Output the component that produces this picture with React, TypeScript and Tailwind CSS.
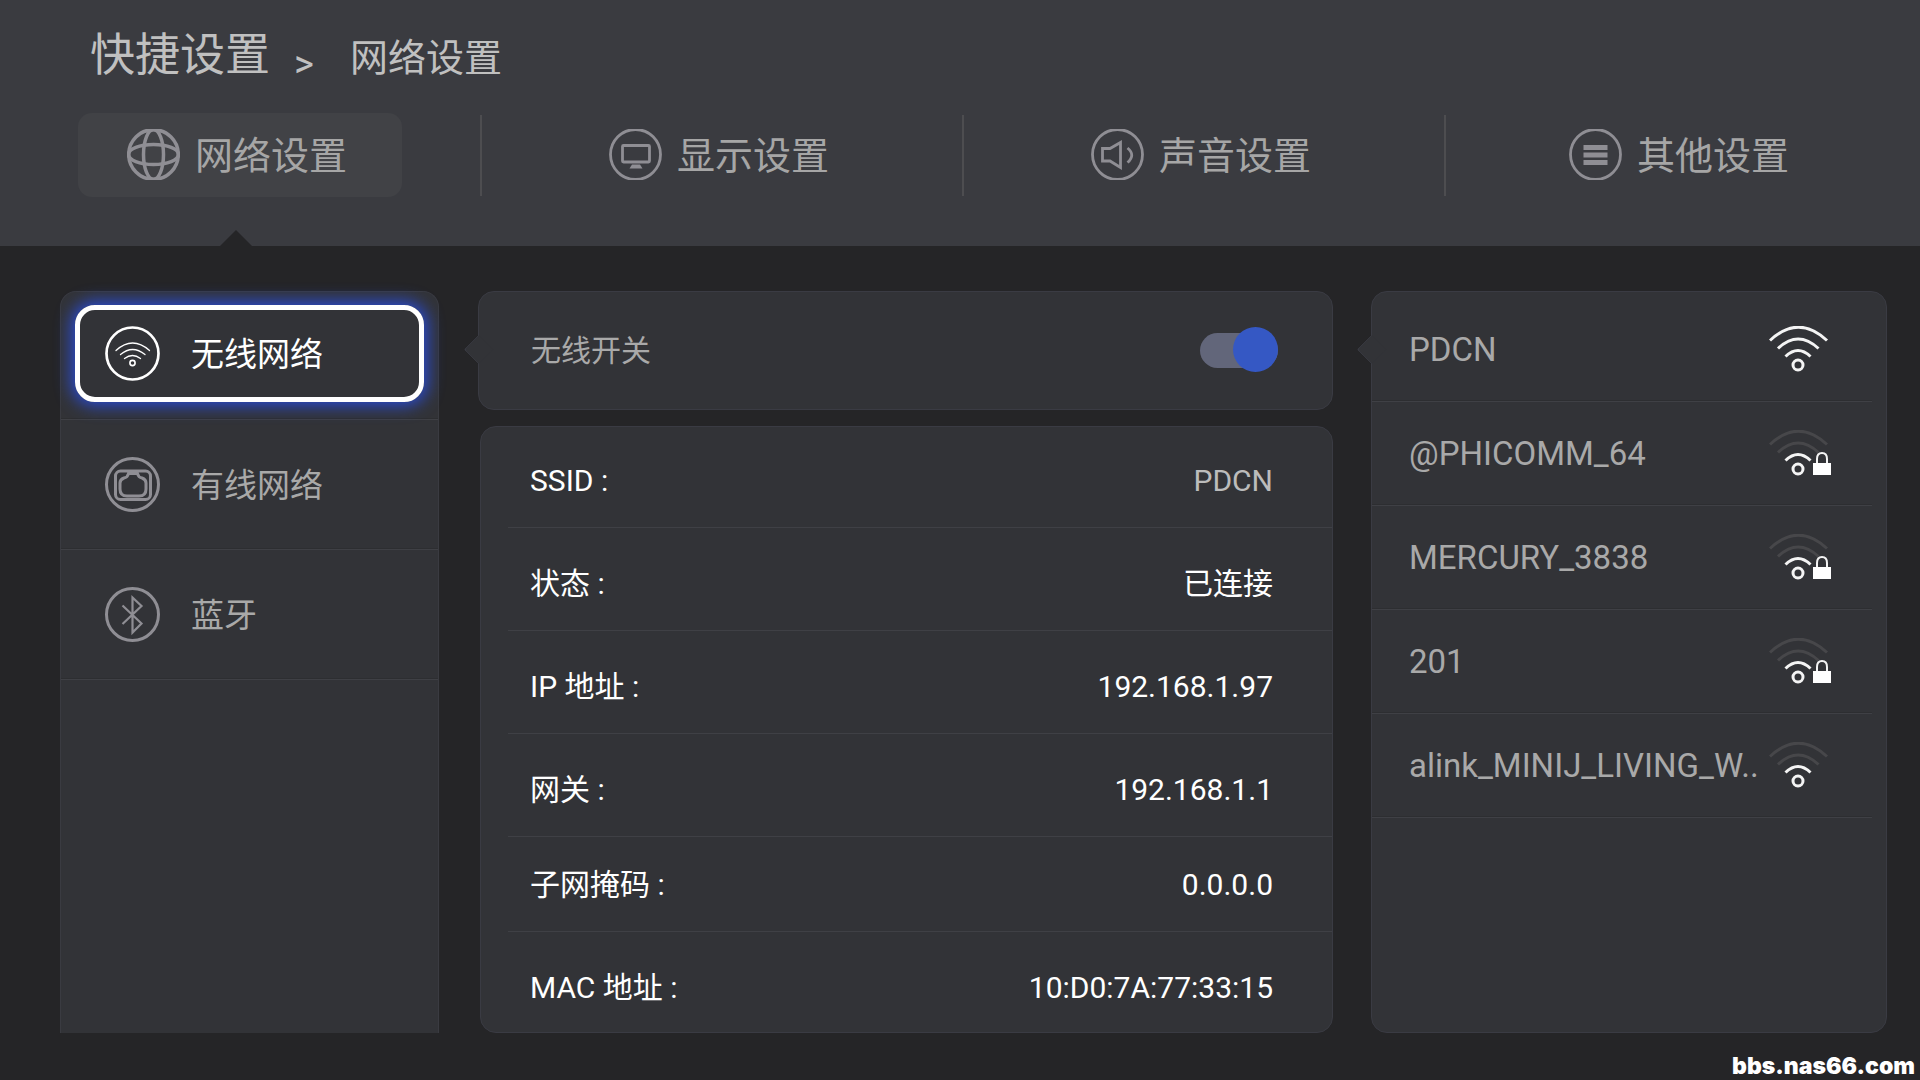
import { useState } from 'react'
import type { ReactNode } from 'react'

function GlobeIcon() {
  return (
    <svg className="h-[51px] w-[53px]" viewBox="0 1 53 51" fill="none" stroke="currentColor" strokeWidth="3.500">
      <circle cx="26.5" cy="26.5" r="24.800" />
      <ellipse cx="26.5" cy="26.5" rx="10" ry="25" />
      <ellipse cx="26.5" cy="26.5" rx="25" ry="10" />
    </svg>
  )
}

function DisplayIcon() {
  return (
    <svg className="h-[51px] w-[53px]" viewBox="0 1 53 51" fill="none" stroke="currentColor" strokeWidth="2.800">
      <circle cx="26.5" cy="26.5" r="25" />
      <rect x="13.5" y="17.5" width="27" height="16.5" rx="1" />
      <path d="M23 36.500h8l2.500 4H20.500z" fill="currentColor" stroke="none" />
    </svg>
  )
}

function SoundIcon() {
  return (
    <svg className="h-[51px] w-[53px]" viewBox="0 1 53 51" fill="none" stroke="currentColor" strokeWidth="2.800">
      <circle cx="26.500" cy="26.5" r="25" />
      <path d="M11.500 20.500h7.500l10.500-6v25l-10.500-6.500h-7.500z" />
      <path d="M36.500 20q8.500 7 0 14.500" />
    </svg>
  )
}

function ListIcon() {
  return (
    <svg className="h-[51px] w-[53px]" viewBox="0 1 53 51" fill="none" stroke="currentColor" strokeWidth="2.800">
      <circle cx="26.500" cy="26.500" r="25" />
      <path d="M14.500 19.500h24M14.500 27h24M14.500 34.500h24" strokeWidth="5" />
    </svg>
  )
}

function WirelessIcon() {
  return (
    <svg className="size-[55px]" viewBox="0 0 55 55" fill="none" stroke="currentColor" strokeWidth="1.300" strokeLinecap="round">
      <circle cx="27.5" cy="27.5" r="26" strokeWidth="2.700" />
      <path d="M11 24.500Q27.500 9.500 44.500 24.500M15.500 28.500Q27.500 18.500 40 28.500M19.500 32.500Q27.500 26.500 35.500 32.500" />
      <circle cx="27.5" cy="37" r="2.600" strokeWidth="1.600" />
    </svg>
  )
}

function WiredIcon() {
  return (
    <svg className="size-[55px]" viewBox="0 0 55 55" fill="none" stroke="currentColor" strokeWidth="3">
      <circle cx="27.5" cy="27.5" r="26" />
      <rect x="10.500" y="14" width="35" height="28.500" rx="5" />
      <path d="M23.500 16.500h9q1 4 4.500 4.500q4 1.500 4 5v6q0 7-7 7h-12q-7 0-7-7v-6q0-3.500 4-5q3.500-.5 4.500-4.500z" />
    </svg>
  )
}

function BluetoothIcon() {
  return (
    <svg className="size-[55px]" viewBox="0 0 55 55" fill="none" stroke="currentColor" strokeWidth="2.200">
      <circle cx="27.5" cy="27.5" r="26" strokeWidth="3" />
      <path d="M17.500 18.500l19 18-9 9V10.500l9 8.500-19 18" />
    </svg>
  )
}

function SignalIcon({ full, locked }: { full: boolean; locked: boolean }) {
  const weak = full ? '#f4f4f4' : '#47474a'
  return (
    <svg className="h-[48px] w-[62px] shrink-0" viewBox="0 1 62 48" fill="none" stroke="#f4f4f4" strokeWidth="3">
      <path d="M1 15.500Q29.500-11 58 15.500" stroke={weak} />
      <path d="M9 23.500Q29 4.500 49.500 23.500" stroke={weak} />
      <path d="M16.500 31.500Q29 19.500 41.500 31.500" />
      <circle cx="29" cy="40" r="5" />
      {locked && (
        <>
          <path d="M48 35v-5q0-6 5-6t5 6v5" strokeWidth="2" />
          <rect x="44" y="34" width="18" height="12" fill="#fff" stroke="none" />
        </>
      )}
    </svg>
  )
}

// little notch that points a card at the column on its left
function Notch() {
  return (
    <span className="absolute top-[47px] -left-[11px] size-[21px] rotate-45 rounded-bl-[3px] border-b border-l border-[#3a3b43] bg-[#323337]" />
  )
}

const tabs: { name: string; icon: ReactNode }[] = [
  { name: '网络设置', icon: <GlobeIcon /> },
  { name: '显示设置', icon: <DisplayIcon /> },
  { name: '声音设置', icon: <SoundIcon /> },
  { name: '其他设置', icon: <ListIcon /> },
]

const menu: { name: string; icon: ReactNode }[] = [
  { name: '无线网络', icon: <WirelessIcon /> },
  { name: '有线网络', icon: <WiredIcon /> },
  { name: '蓝牙', icon: <BluetoothIcon /> },
]

const details = [
  { label: 'SSID :', value: 'PDCN', row: 'h-[101px] pt-[6px]', color: 'text-[#bcbcbc]' },
  { label: '状态 :', value: '已连接', row: 'h-[103px] pt-[8px]', color: 'text-white' },
  { label: 'IP 地址 :', value: '192.168.1.97', row: 'h-[103px] pt-[8px]', color: 'text-white' },
  { label: '网关 :', value: '192.168.1.1', row: 'h-[103px] pt-[8px]', color: 'text-white' },
  { label: '子网掩码 :', value: '0.0.0.0', row: 'h-[95px]', color: 'text-white' },
  { label: 'MAC 地址 :', value: '10:D0:7A:77:33:15', row: 'h-[100px] pt-[11px]', color: 'text-white' },
]

const networks = [
  { name: 'PDCN', full: true, locked: false },
  { name: '@PHICOMM_64', full: false, locked: true },
  { name: 'MERCURY_3838', full: false, locked: true },
  { name: '201', full: false, locked: true },
  { name: 'alink_MINIJ_LIVING_W..', full: false, locked: false },
]

export default function App() {
  const [enabled, setEnabled] = useState(true)

  return (
    <div className="flex min-h-screen flex-col bg-[#252527] font-['Roboto','Noto_Sans_CJK_SC',sans-serif] text-[#a9a9a9]">
      <header className="relative flex h-[246px] flex-col bg-[#3a3b40]">
        <nav className="flex h-[113px] items-baseline pt-[22px] pl-[90px] text-[#c0c0c0]">
          <a href="#quick" className="text-[45px] leading-[68px]">快捷设置</a>
          <span className="w-[80px] self-start pt-[14px] pl-[24px] text-[38px] leading-[56px]">&gt;</span>
          <h1 className="text-[38px] leading-[56px]">网络设置</h1>
        </nav>
        <div className="grid grid-cols-[482fr_482fr_482fr_474fr]">
          {tabs.map((tab, i) => (
            <div key={tab.name} className="flex h-[84px] items-center justify-center">
              <button
                className={`ml-auto flex h-[84px] w-[324px] items-center gap-[15px] rounded-[14px] pb-[1px] pl-[49px] text-[38px] text-[#a6a6a6] ${i === 0 ? 'bg-[#414246]' : ''}`}
              >
                <span className="text-[#8f8e94]">{tab.icon}</span>
                <span className="pt-[4px]">{tab.name}</span>
              </button>
              <span className={`ml-auto h-[81px] w-[2px] ${i < 3 ? 'bg-[#4d4d50]' : ''}`} />
            </div>
          ))}
        </div>
        <svg className="absolute bottom-0 left-[220px] h-[16px] w-[32px]" viewBox="0 0 32 16">
          <path d="M0 16L16 0l16 16z" fill="#252527" />
        </svg>
      </header>

      <main className="grid flex-1 grid-cols-[379fr_856fr_516fr] gap-[38px] pt-[45px] pr-[33px] pb-[47px] pl-[60px]">
        <nav className="rounded-t-[16px] border border-b-0 border-[#3a3b41] bg-[#323337]">
          {menu.map((item, i) => (
            <div
              key={item.name}
              className={`flex flex-col border-b border-[#3f4045] px-[14px] shadow-[inset_0_-1px_0_#2d2e31] ${i === 0 ? 'h-[128px] pt-[13px]' : 'h-[130px] pt-[16px]'}`}
            >
              <button
                className={`flex h-[97px] items-center gap-[31px] rounded-[20px] border-[5px] pl-[25px] text-[33px] ${
                  i === 0
                    ? 'border-white text-white shadow-[0_0_16px_4px_#2a4bd0]'
                    : 'border-transparent'
                }`}
              >
                <span className={i === 0 ? 'text-white' : 'text-[#8f8e94]'}>{item.icon}</span>
                <span className="pt-[3px]">{item.name}</span>
              </button>
            </div>
          ))}
        </nav>

        <section className="flex flex-col gap-[16px] pl-[1px]">
          <div className="relative flex h-[119px] items-center justify-between rounded-[16px] border border-[#3a3b43] bg-[#323337] pr-[54px] pl-[52px]">
            <Notch />
            <label htmlFor="wifi" className="text-[30px]">无线开关</label>
            <input
              id="wifi"
              type="checkbox"
              role="switch"
              checked={enabled}
              onChange={() => setEnabled(!enabled)}
              className="relative h-[35px] w-[78px] appearance-none rounded-full bg-[#62667a] before:absolute before:-top-[6px] before:left-0 before:size-[45px] before:rounded-full before:bg-[#8f8e94] checked:before:left-[33px] checked:before:bg-[#3558c4]"
            />
          </div>
          <dl className="ml-[2px] flex-1 rounded-[16px] border border-[#3a3b43] bg-[#323337] pl-[27px] text-[30px]">
            {details.map((d) => (
              <div
                key={d.label}
                className={`flex items-center justify-between border-b border-[#3f4045] pr-[59px] pl-[22px] last:border-b-0 ${d.row}`}
              >
                <dt className="text-white">{d.label}</dt>
                <dd className={d.color}>{d.value}</dd>
              </div>
            ))}
          </dl>
        </section>

        <section className="relative rounded-[16px] border border-[#3a3b43] bg-[#323337] pt-[6px] pr-[14px]">
          <Notch />
          <ul>
            {networks.map((n) => (
              <li key={n.name} className="border-b border-[#3f4045] shadow-[inset_0_-1px_0_#2d2e31]">
                <button className="flex h-[103px] w-full items-center justify-between pr-[41px] pl-[37px] text-[33px]">
                  <span className="whitespace-nowrap">{n.name}</span>
                  <SignalIcon full={n.full} locked={n.locked} />
                </button>
              </li>
            ))}
          </ul>
        </section>
      </main>

      <a
        href="#forum"
        className="absolute right-[5px] bottom-[1px] font-['Inter',sans-serif] text-[23px] leading-[26px] font-black text-white"
      >
        bbs.nas66.com
      </a>
    </div>
  )
}
